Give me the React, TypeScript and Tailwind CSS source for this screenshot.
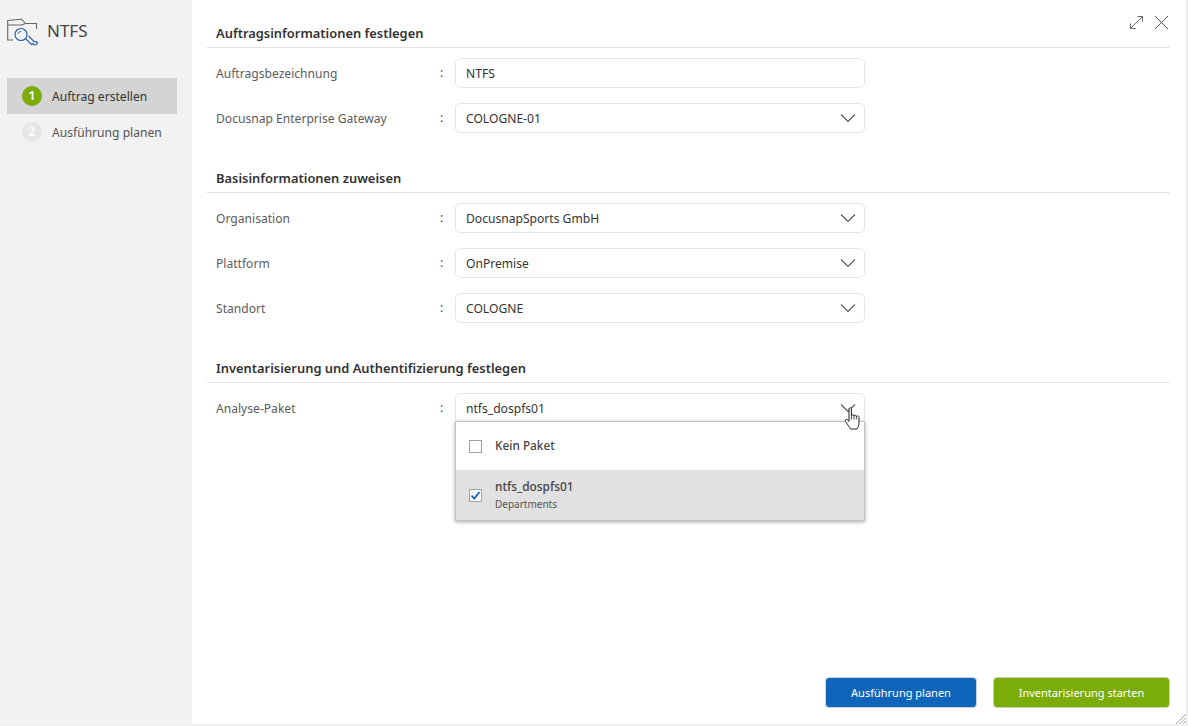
import * as React from 'react'

function NtfsIcon() {
  return (
    <svg width="32" height="30" viewBox="0 0 32 30" fill="none" className="shrink-0">
      <path d="M6 22H0.7V2.5L14.5 1.2L18.5 5.5H29.5V11" stroke="#666" strokeWidth="1.1" />
      <path d="M0.7 7H14.5L18.5 5.5" stroke="#666" strokeWidth="1.1" />
      <circle cx="14" cy="16.5" r="6" stroke="#2f5fa8" strokeWidth="1.2" />
      <path d="M18.5 20.5L24.5 26.5L26 25.5L27 27L29.5 26.5L30.5 24.5L29 23.5L27.5 24L21.5 18" stroke="#2f5fa8" strokeWidth="1.2" strokeLinejoin="round" />
      <path d="M11 16C11.3 14.5 12.5 13.5 14 13.5" stroke="#2f5fa8" strokeWidth="1" />
    </svg>
  )
}

function Chevron() {
  return (
    <svg width="16" height="10" viewBox="0 0 16 10" fill="none" className="shrink-0">
      <path d="M1 1.5L8 8.5L15 1.5" stroke="#555" strokeWidth="1.1" />
    </svg>
  )
}

function HandCursor() {
  return (
    <svg width="18" height="25" viewBox="0 0 18 24" className="block">
      <path
        d="M5 2.2C5 1 7.4 1 7.4 2.2V9.2C7.6 8 10 8 10 9.5C10.2 8.4 12.3 8.6 12.4 10C12.7 9 15 9.2 15 10.8V16C15 19 14 20.5 13 22.5H6.5C5.5 20.5 3.5 18 1.5 14.8C0.8 13.5 2.4 12 3.6 13.2L5 15Z"
        fill="#fff"
        stroke="#222"
        strokeWidth="1"
        strokeLinejoin="round"
      />
      <path d="M7.4 9V13M10 9.5V13M12.4 10V13" stroke="#222" strokeWidth="0.8" />
    </svg>
  )
}

function Row({ label, value, select = true, children }: { label: string; value: string; select?: boolean; children?: React.ReactNode }) {
  return (
    <div className="flex h-[30px] items-center">
      <div className="w-[233px] pl-[9px] pt-[2px] text-[#5c5c5c]">{label}</div>
      <div className="w-[15px] text-[#444]">:</div>
      <div className="relative flex h-[30px] w-[410px] items-center justify-between rounded-[5px] border border-[#e6e6e6] bg-white pl-[10px] pr-[8px] text-[#333]">
        <span className="pt-[2px]">{value}</span>
        {select && <Chevron />}
        {children}
      </div>
    </div>
  )
}

function Section({ title, children }: { title: string; children: React.ReactNode }) {
  return (
    <section className="mb-[31px]">
      <h2 className="flex h-[29px] items-center border-b border-[#e3e3e3] pl-[9px] pt-[2px] text-[12.9px] font-semibold text-[#333]">{title}</h2>
      <div className="mt-[10px] flex flex-col gap-[15px]">{children}</div>
    </section>
  )
}

export default function App() {
  return (
    <div
      className="flex h-[726px] w-[1188px] overflow-hidden border-r-2 border-b-2 border-[#f0f0f0] bg-white text-[12.1px]"
      style={{ fontFamily: '"Noto Sans", "Open Sans", sans-serif' }}
    >
      <aside className="w-[192px] shrink-0 bg-[#f2f2f2] pl-[7px]">
        <div className="flex h-[78px] items-start pt-[18px]">
          <NtfsIcon />
          <span className="ml-[8px] mt-[1px] text-[17px] leading-[24px] text-[#444]">NTFS</span>
        </div>
        <div className="flex h-[36px] w-[170px] items-center bg-[#d4d4d4] pl-[15px] text-[#333]">
          <span className="flex h-[20px] w-[20px] items-center justify-center rounded-full bg-[#7aad0a] text-[13px] font-semibold text-white">1</span>
          <span className="ml-[10px] pt-[2px]">Auftrag erstellen</span>
        </div>
        <div className="flex h-[36px] w-[170px] items-center pl-[15px] text-[#555]">
          <span className="flex h-[20px] w-[20px] items-center justify-center rounded-full bg-[#e6e6e6] text-[13px] font-semibold text-white">2</span>
          <span className="ml-[10px] pt-[2px]">Ausführung planen</span>
        </div>
      </aside>

      <main className="relative flex min-w-0 flex-1 flex-col pb-[16px] pl-[15px] pr-[16px] pt-[19px]">
        <div className="absolute right-[17px] top-[15px] flex items-center gap-[10px]">
          <svg width="15" height="15" viewBox="0 0 15 15" fill="none" stroke="#6b6b6b" strokeWidth="1">
            <path d="M1.5 13.5L13.5 1.5M8.5 1.5H13.5V6.5M1.5 8.5V13.5H6.5" />
          </svg>
          <svg width="15" height="15" viewBox="0 0 15 15" fill="none" stroke="#555" strokeWidth="1">
            <path d="M1 1L14 14M14 1L1 14" />
          </svg>
        </div>

        <div className="flex-1">
          <Section title="Auftragsinformationen festlegen">
            <Row label="Auftragsbezeichnung" value="NTFS" select={false} />
            <Row label="Docusnap Enterprise Gateway" value="COLOGNE-01" />
          </Section>
          <Section title="Basisinformationen zuweisen">
            <Row label="Organisation" value="DocusnapSports GmbH" />
            <Row label="Plattform" value="OnPremise" />
            <Row label="Standort" value="COLOGNE" />
          </Section>
          <Section title="Inventarisierung und Authentifizierung festlegen">
            <Row label="Analyse-Paket" value="ntfs_dospfs01">
              <div className="absolute left-[-1px] top-[27px] z-10 w-[410px] border border-[#c4c4c4] bg-white shadow-[0_1px_4px_rgba(0,0,0,0.35)]">
                <div className="flex h-[48px] items-center pl-[13px]">
                  <span className="h-[13px] w-[13px] border border-[#a0a0a0] bg-white" />
                  <span className="ml-[13px] text-[11.8px] font-medium text-[#444]">Kein Paket</span>
                </div>
                <div className="flex h-[50px] items-center bg-[#e1e1e1] pl-[13px]">
                  <span className="flex h-[13px] w-[13px] items-center justify-center border border-[#a0a0a0] bg-white">
                    <svg width="11" height="11" viewBox="0 0 11 11" fill="none">
                      <path d="M1.5 5.5L4.2 8.5L9.5 2" stroke="#0f62b8" strokeWidth="1.8" />
                    </svg>
                  </span>
                  <div className="ml-[13px] flex flex-col">
                    <span className="text-[11.9px] font-medium leading-[19px] text-[#444]">ntfs_dospfs01</span>
                    <span className="text-[10px] leading-[17px] text-[#555]">Departments</span>
                  </div>
                </div>
              </div>
              <div className="absolute left-[388px] top-[12px] z-20">
                <HandCursor />
              </div>
            </Row>
          </Section>
        </div>

        <div className="flex justify-end gap-[16px] text-[11px] text-white">
          <button className="h-[31px] w-[152px] rounded-[4px] border border-[#c9d4e0] bg-[#0f65b9] pt-[1px]">Ausführung planen</button>
          <button className="h-[31px] w-[177px] rounded-[4px] border border-[#ccd6b0] bg-[#7aad0a] pt-[1px]">Inventarisierung starten</button>
        </div>

        <svg width="11" height="11" viewBox="0 0 11 11" className="absolute bottom-0 right-0" stroke="#8a8a8a" strokeWidth="0.8">
          <path d="M1 11L11 1M4.5 11L11 4.5M8 11L11 8" />
        </svg>
      </main>
    </div>
  )
}
